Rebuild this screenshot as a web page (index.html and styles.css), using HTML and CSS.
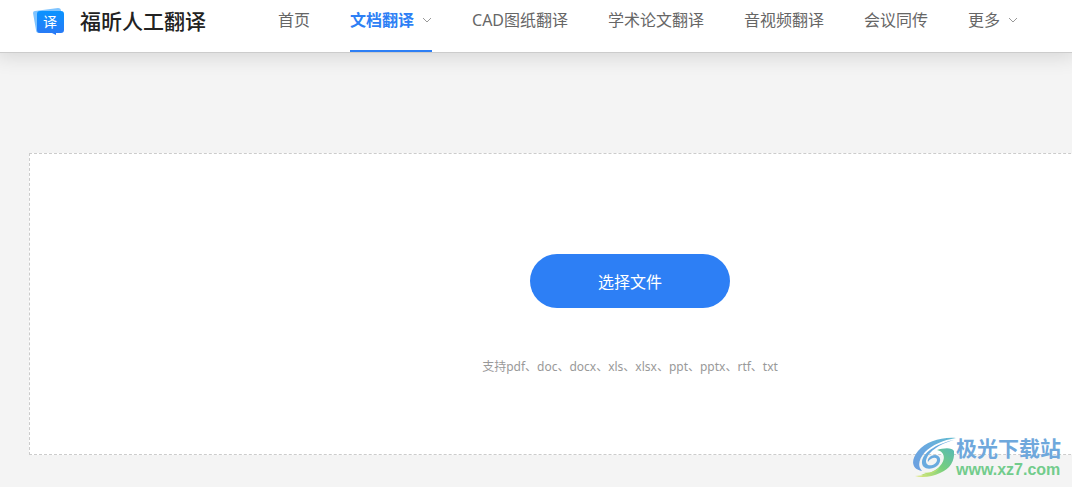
FILE: index.html
```html
<!DOCTYPE html>
<html lang="zh-CN">
<head>
    <meta charset="UTF-8">
    <title>福昕人工翻译</title>
    <link rel="stylesheet" href="styles.css">
</head>
<body>
    <!-- Navbar -->
    <header class="header">
        <a class="logo" href="#">
            <svg class="logo-icon" width="32" height="28" viewBox="0 0 32 28" aria-hidden="true">
                <defs>
                    <linearGradient id="logoBlue" x1="0" y1="0" x2="0" y2="1">
                        <stop offset="0" stop-color="#0a93ff"/>
                        <stop offset="1" stop-color="#2b78f5"/>
                    </linearGradient>
                </defs>
                <path d="M2 3 L25 0 Q28 0 28 3 L28 24 L6 25 Q3 25 3 22 L0 5 Q0 3 2 3Z" fill="#7fc4ff"/>
                <path d="M7 3 H28 Q31 3 31 6 V22 Q31 25 28 25 H23 V27 L19 25 H7 Q4 25 4 22 V6 Q4 3 7 3Z" fill="url(#logoBlue)"/>
                <text class="logo-char" x="17" y="19" text-anchor="middle">译</text>
            </svg>
            <span class="logo-text">福昕人工翻译</span>
        </a>
        <nav class="menu">
            <a href="#">首页</a>
            <a href="#" class="active">文档翻译
                <svg class="arrow" width="10" height="6" viewBox="0 0 10 6" aria-hidden="true"><path d="M1 1 L5 5 L9 1"/></svg>
            </a>
            <a href="#">CAD图纸翻译</a>
            <a href="#">学术论文翻译</a>
            <a href="#">音视频翻译</a>
            <a href="#">会议同传</a>
            <a href="#">更多
                <svg class="arrow" width="10" height="6" viewBox="0 0 10 6" aria-hidden="true"><path d="M1 1 L5 5 L9 1"/></svg>
            </a>
        </nav>
    </header>

    <!-- Upload area -->
    <main class="container">
        <section class="upload">
            <button type="button" class="upload-button">选择文件</button>
            <p class="upload-tip">支持pdf、doc、docx、xls、xlsx、ppt、pptx、rtf、txt</p>
        </section>
    </main>

    <!-- Corner mark -->
    <div class="mark">
        <svg class="mark-icon" width="44" height="42" viewBox="0 0 44 42" aria-hidden="true">
            <defs>
                <linearGradient id="markBlue" x1="1" y1="0" x2="0" y2="1">
                    <stop offset="0" stop-color="#62bcd0"/>
                    <stop offset="0.5" stop-color="#6aa9e0"/>
                    <stop offset="1" stop-color="#6c9fe0"/>
                </linearGradient>
                <linearGradient id="markGreen" x1="1" y1="0" x2="0" y2="1">
                    <stop offset="0" stop-color="#58b9b4"/>
                    <stop offset="0.5" stop-color="#76cf7e"/>
                    <stop offset="1" stop-color="#e2e878"/>
                </linearGradient>
            </defs>
            <path d="M44 1 C28 0 14 5 6 14 C-2 24 0 32 10 34 C5 29 7 22 13 15 C20 8 31 3 44 1Z" fill="url(#markBlue)"/>
            <path d="M42 3 C27 6 12 14 10 24 C9 32 18 34 25 29 C30 25 29 18 23 18 C18 18 15 22 16 25 C18 21 25 19 25 23 C25 28 15 31 14 25 C14 16 27 7 42 3Z" fill="#69aadf"/>
            <path d="M25 13 C31 11 40 10 42 14 C43 24 38 32 28 36 C20 40 10 41 3 39 C11 39 20 36 26 31 C34 24 34 15 25 13Z" fill="url(#markGreen)"/>
            <path d="M10 35 C17 37 24 34 28 30 C25 36 16 38 9 38 L14 36Z" fill="#b6de72"/>
        </svg>
        <div class="mark-text">
            <span class="mark-name">极光下载站</span>
            <span class="mark-url">www.xz7.com</span>
        </div>
    </div>
</body>
</html>
```

FILE: styles.css
```css
/* General Styles */
* {
    box-sizing: border-box;
}
body {
    margin: 0;
    font-family: "Noto Sans", "Noto Sans CJK SC", sans-serif;
    color: #666666;
    background-color: #f4f4f4;
}
a {
    color: inherit;
    text-decoration: none;
}
/* Navbar Styles */
.header {
    position: relative;
    display: flex;
    height: 53px;
    padding-left: 33px;
    background-color: #ffffff;
    border-bottom: 1px solid #cccccc;
    box-shadow: 0 0 20px 4px rgba(0, 0, 0, 0.12);
    white-space: nowrap;
}
.logo {
    display: flex;
    align-items: center;
    gap: 15px;
    width: 245px;
    height: 44px;
}
.logo-char {
    font-size: 14px;
    fill: #ffffff;
}
.logo-text {
    font-size: 21px;
    font-weight: 500;
    line-height: 28px;
    padding-bottom: 2px;
    color: #222222;
}
.menu {
    display: flex;
    gap: 40px;
    font-size: 16px;
    line-height: 40px;
}
.menu a {
    display: flex;
    align-items: center;
    gap: 8px;
    height: 52px;
    padding-bottom: 12px;
}
.menu .active {
    color: #2d7ff5;
    font-weight: bold;
    border-bottom: 2px solid #2d7ff5;
    padding-bottom: 10px;
}
.arrow {
    fill: none;
    stroke: #999999;
}
/* Upload Styles */
.container {
    padding: 100px 0 32px 29px;
    overflow: hidden;
}
.upload {
    display: flex;
    flex-direction: column;
    align-items: center;
    width: 1202px;
    padding: 100px 0 76px;
    background-color: #ffffff;
    border: 1px dashed #cccccc;
}
.upload-button {
    width: 200px;
    height: 54px;
    padding-bottom: 2px;
    border: none;
    border-radius: 27px;
    background-color: #2d7ff5;
    color: #ffffff;
    font-family: inherit;
    font-size: 16px;
    cursor: pointer;
}
.upload-tip {
    margin: 48px 0 0;
    font-size: 12px;
    line-height: 22px;
    color: #999999;
}
/* Corner Mark Styles */
.mark {
    position: absolute;
    right: 11px;
    bottom: 7px;
    display: flex;
    align-items: center;
}
.mark-text {
    display: flex;
    flex-direction: column;
    font-weight: bold;
}
.mark-name {
    font-size: 21px;
    line-height: 24px;
    color: #6fa8dc;
}
.mark-url {
    font-family: "Liberation Sans", Arial, sans-serif;
    font-size: 16px;
    line-height: 20px;
    color: #72cc8c;
}
```
